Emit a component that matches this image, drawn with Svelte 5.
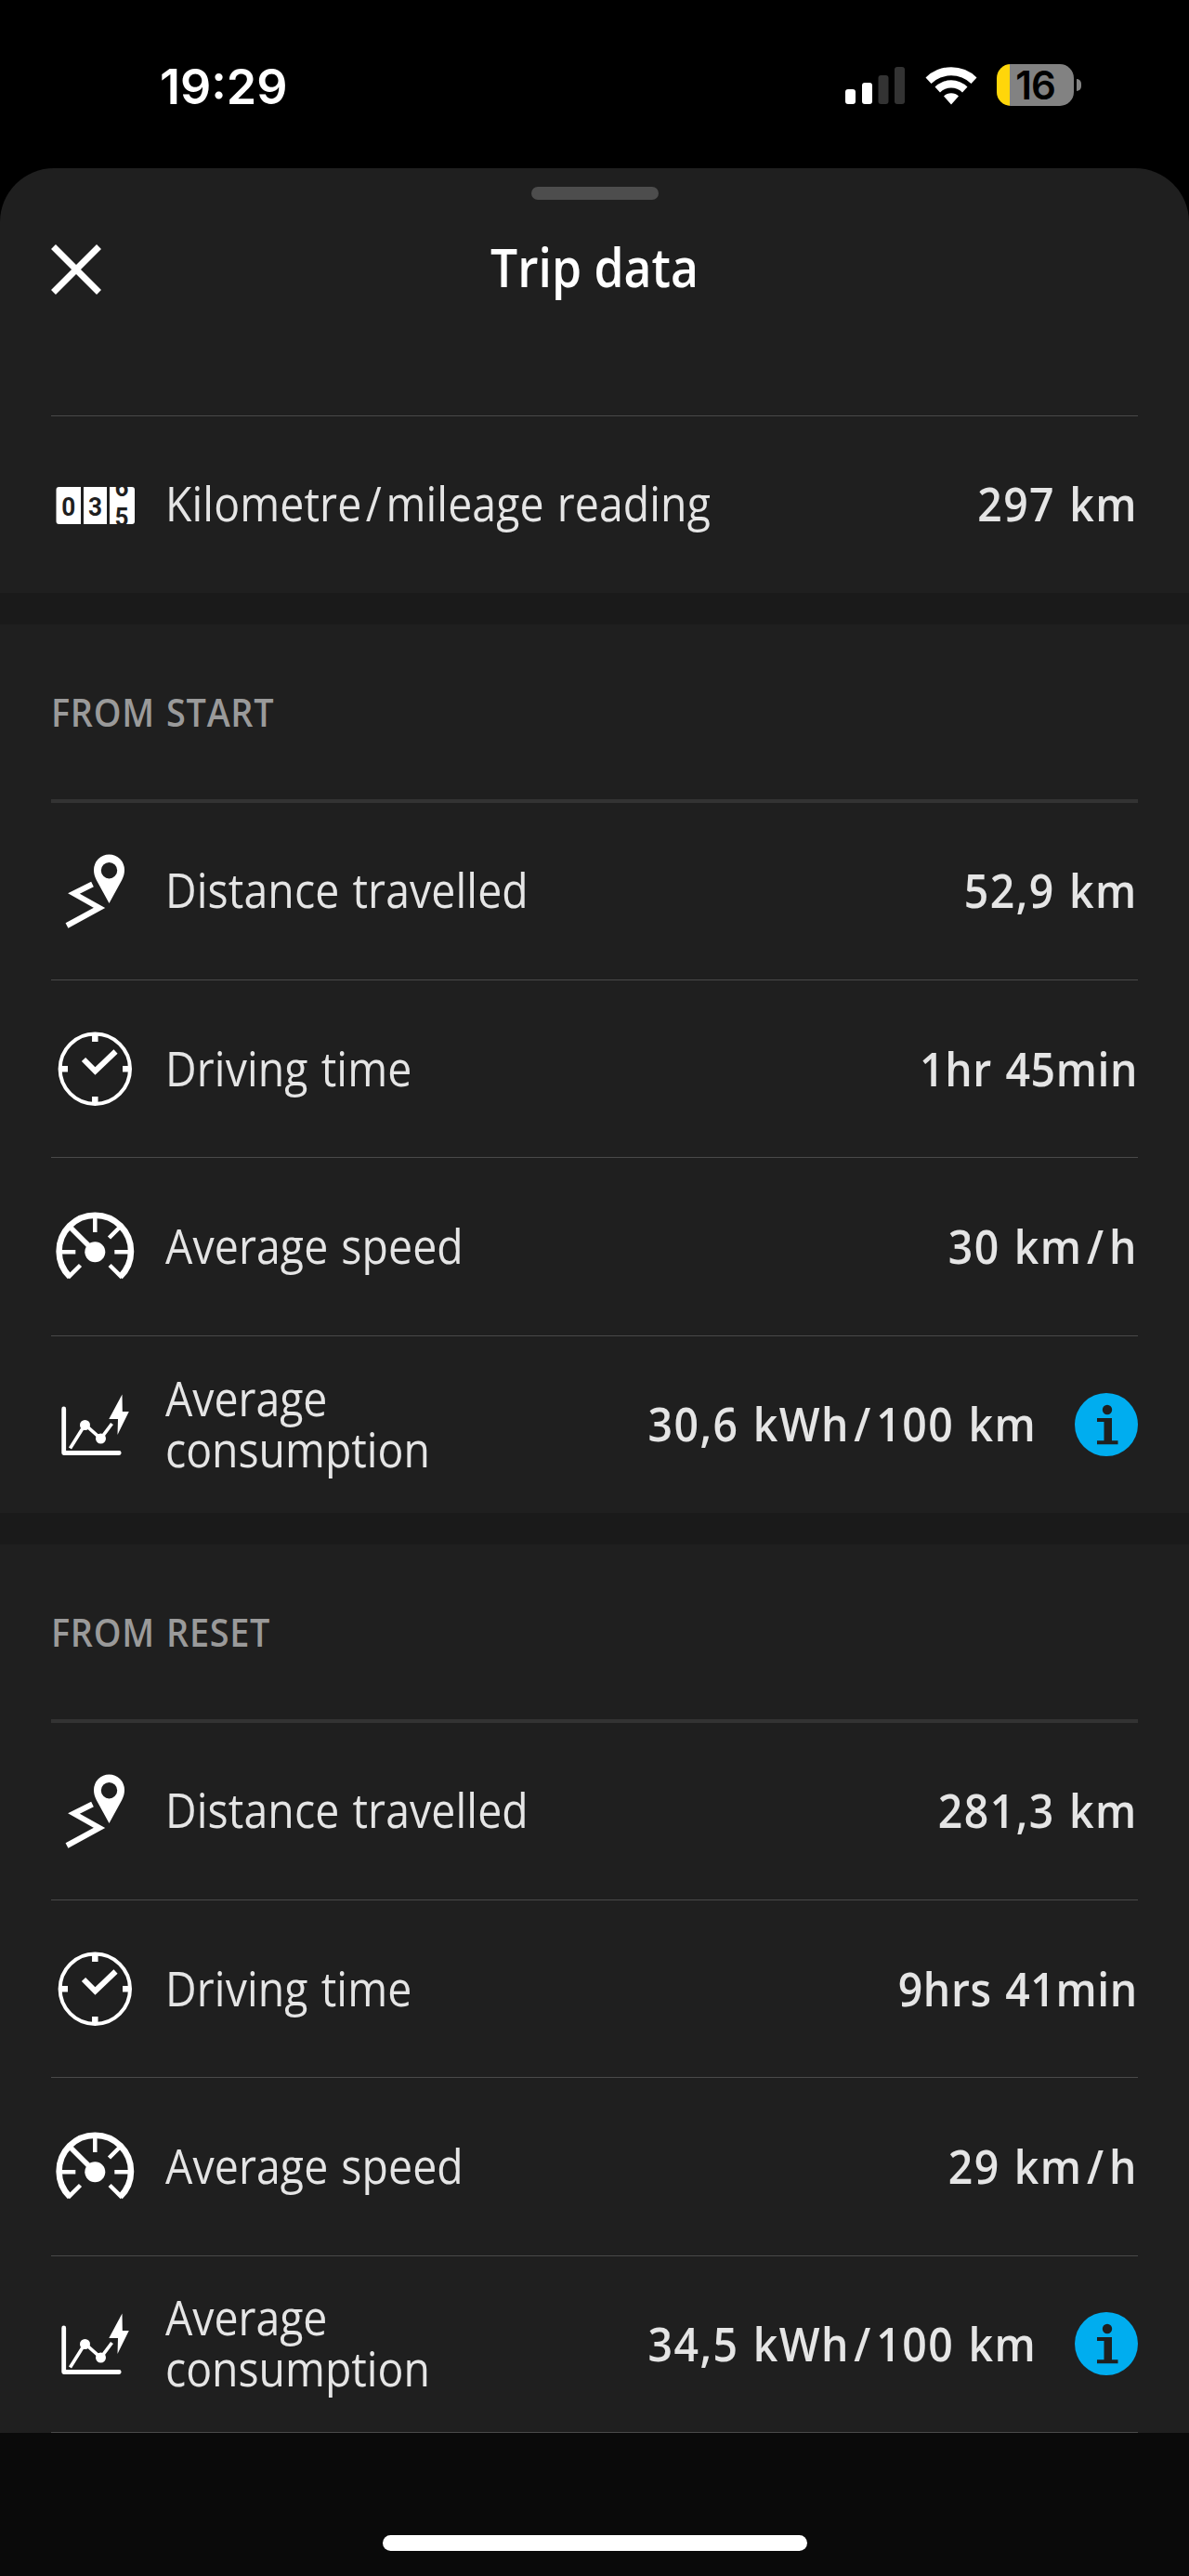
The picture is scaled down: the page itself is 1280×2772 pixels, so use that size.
<script>
  const sections = [
    {
      title: 'FROM START',
      rows: [
        { icon: 'route', label: 'Distance travelled', value: '52,9 km' },
        { icon: 'clock', label: 'Driving time', value: '1hr 45min', duration: true },
        { icon: 'gauge', label: 'Average speed', value: '30 km/h' },
        { icon: 'chart', label: 'Average consumption', value: '30,6 kWh/100 km', info: true }
      ]
    },
    {
      title: 'FROM RESET',
      rows: [
        { icon: 'route', label: 'Distance travelled', value: '281,3 km' },
        { icon: 'clock', label: 'Driving time', value: '9hrs 41min', duration: true },
        { icon: 'gauge', label: 'Average speed', value: '29 km/h' },
        { icon: 'chart', label: 'Average consumption', value: '34,5 kWh/100 km', info: true }
      ]
    }
  ];
</script>

{#snippet icon(name)}
  <svg class="icon" viewBox="0 0 88 88" width="88" height="88" aria-hidden="true">
    {#if name === 'odometer'}
      <path d="M3.500 25H27v40H3.500a3 3 0 0 1-3-3V28a3 3 0 0 1 3-3zM30 25h25v40H30zM58 25h24a3 3 0 0 1 3 3v34a3 3 0 0 1-3 3H58z" fill="#fff" />
      <g class="digits">
        <text x="13.700" y="55.500" textLength="15" lengthAdjust="spacingAndGlyphs">0</text>
        <text x="42.500" y="55.500" textLength="15" lengthAdjust="spacingAndGlyphs">3</text>
        <svg x="57" y="25" width="28" height="40" viewBox="57 25 28 40">
          <text x="71" y="34.500" textLength="15" lengthAdjust="spacingAndGlyphs">6</text>
          <text x="71" y="67" textLength="15" lengthAdjust="spacingAndGlyphs">5</text>
        </svg>
      </g>
    {:else if name === 'route'}
      <g transform="translate(0 1)">
        <path fill="#fff" fill-rule="evenodd" d="M57.500 3.500a16.500 16.500 0 0 1 16.500 16.500c0 4-1 7.500-2.800 11L57.500 56 43.800 31c-1.800-3.500-2.800-7-2.800-11A16.500 16.500 0 0 1 57.500 3.500zm0 8.500a8.700 8.700 0 1 0 0 17.400 8.700 8.700 0 0 0 0-17.400z" />
        <path d="M39.500 35.500 19.500 45.500 47 61 12 80" fill="none" stroke="#fff" stroke-width="6" />
      </g>
    {:else if name === 'clock'}
      <g fill="none" stroke="#fff">
        <circle cx="42.300" cy="44.300" r="37.700" stroke-width="4" />
        <path d="M42.300 6v9M42.300 74v9M4 44.300h9M72 44.300h9" stroke-width="6.500" />
        <path d="M30 34l12.500 12.500L64.500 25.500" stroke-width="6" />
      </g>
    {:else if name === 'gauge'}
      <g fill="none" stroke="#fff">
        <path d="M15.200 77A38.700 38.700 0 1 1 69.400 77" stroke-width="6.500" />
        <path d="M26.500 64.500 13.300 77.700M58.100 64.500l13.200 13.200M6 50.300h15.300M63.300 50.300h15.300M42.300 13v16M70 22.500 57.500 35" stroke-width="4.500" />
        <path d="M15.500 23.500 42.300 50.300" stroke-width="5.500" />
        <circle cx="42.300" cy="50.300" r="11" fill="#fff" stroke="none" />
      </g>
    {:else}
      <g fill="none" stroke="#fff">
        <path d="M8.700 27v47.500h59.500" stroke-width="4.800" stroke-linecap="round" stroke-linejoin="round" />
        <path d="M15.500 69.500 31.500 44l17 15L60.500 43" stroke-width="3.600" />
      </g>
      <circle cx="31.500" cy="44.500" r="5.500" fill="#fff" />
      <circle cx="48.500" cy="59" r="5.500" fill="#fff" />
      <path d="M71.500 11.500 57.300 38h9.700L66.500 55l12.300-25h-7z" fill="#fff" />
    {/if}
  </svg>
{/snippet}

{#snippet spaced(text)}
  {#each text.split('/') as part, i}{#if i}<span class="slash">/</span>{/if}{part}{/each}
{/snippet}

{#snippet row(item)}
  <div class="row">
    {@render icon(item.icon)}
    <span class="label" class:narrow={item.info}>{@render spaced(item.label)}</span>
    <span class="value" class:duration={item.duration}>{@render spaced(item.value)}</span>
    {#if item.info}
      <svg class="info" viewBox="0 0 68 68" width="68" height="68" aria-label="Information">
        <circle cx="34" cy="34" r="34" fill="#00adef" />
        <circle cx="35" cy="18" r="5.200" fill="#1f1f1f" />
        <path d="M24 27h16v24.200h6.500v4H24v-4h7.500V31H24z" fill="#1f1f1f" />
      </svg>
    {/if}
  </div>
{/snippet}

<div class="screen">
  <header class="status">
    <span class="time">19:29</span>
    <div class="indicators">
      <svg width="66" height="42" viewBox="0 0 66 42" aria-hidden="true">
        <rect x="1" y="25" width="11" height="16" rx="3" fill="#fff" />
        <rect x="19" y="18" width="11" height="23" rx="3" fill="#fff" />
        <rect x="36.500" y="10" width="11" height="31" rx="3" fill="#333" />
        <rect x="54" y="1" width="11" height="40" rx="3" fill="#333" />
      </svg>
      <svg width="58" height="42" viewBox="0 0 58 42" aria-hidden="true">
        <path d="M1.500 12.500a39 39 0 0 1 55 0l-6 6.500a31 31 0 0 0-43 0zM11.500 22.500a25 25 0 0 1 35 0L41 28.500a17 17 0 0 0-24 0zM21 32.500a11.500 11.500 0 0 1 16 0L29 41.500z" fill="#fff" />
      </svg>
      <div class="battery"><span>16</span></div>
    </div>
  </header>

  <main class="sheet">
    <div class="handle"></div>
    <div class="bar">
      <svg class="close" viewBox="0 0 54 54" width="54" height="54" aria-label="Close">
        <path d="M2.500 2.500 51.500 51.500M51.500 2.500 2.500 51.500" stroke="#fff" stroke-width="7" />
      </svg>
      <h1>Trip data</h1>
    </div>
    {@render row({ icon: 'odometer', label: 'Kilometre/mileage reading', value: '297 km' })}
    {#each sections as section}
      <section>
        <h2>{section.title}</h2>
        {#each section.rows as item}
          {@render row(item)}
        {/each}
      </section>
    {/each}
  </main>

  <footer><div class="home"></div></footer>
</div>

<style>
  :global(body) {
    margin: 0;
    background: #000;
  }
  .screen {
    width: 1280px;
    height: 2772px;
    display: flex;
    flex-direction: column;
    overflow: hidden;
    background: #000;
    color: #e5e5e5;
    font-family: 'Open Sans', 'Noto Sans', sans-serif;
  }
  .status {
    height: 181px;
    display: flex;
    justify-content: space-between;
    box-sizing: border-box;
    padding: 69px 116px 0 172px;
  }
  .time {
    padding-top: 1px;
    font: 600 52px/48px Inter, sans-serif;
    color: #fff;
  }
  .indicators {
    display: flex;
    align-items: flex-start;
    gap: 20px;
  }
  .indicators svg {
    margin-top: 2px;
  }
  .battery {
    position: relative;
    box-sizing: border-box;
    width: 83px;
    height: 45px;
    margin-right: 8px;
    border-radius: 15px;
    background: linear-gradient(90deg, #ffd60a 14px, #828282 14px);
    color: #000;
    text-align: center;
    letter-spacing: -1px;
    font: 600 42px/45px Inter, sans-serif;
  }
  .battery::after {
    content: '';
    position: absolute;
    left: 86px;
    top: 16px;
    width: 5px;
    height: 13px;
    border-radius: 0 6px 6px 0;
    background: #828282;
  }
  .sheet {
    background: #1f1f1f;
    border-radius: 58px 58px 0 0;
  }
  .handle {
    width: 137px;
    height: 14px;
    margin: 0 auto;
    border-radius: 7px;
    background: #4d4d4d;
    transform: translateY(20px);
  }
  .bar {
    height: 251.500px;
    display: grid;
    grid-template-columns: 54px 1fr 54px;
    align-items: start;
    box-sizing: border-box;
    padding: 68px 55px 0;
  }
  h1 {
    margin: -12px 0 0;
    font-size: 58px;
    line-height: 72px;
    font-weight: 600;
    text-align: center;
    color: #fff;
    transform: scaleX(0.89);
  }
  .row {
    height: 191.250px;
    margin: 0 55px;
    padding-left: 5px;
    box-sizing: border-box;
    display: flex;
    align-items: center;
    border-top: 1px solid #494949;
  }
  h2 + .row {
    border-top: 4px solid #333;
    margin-top: -3px;
    height: 194.250px;
  }
  section:last-child .row:last-child {
    border-bottom: 1px solid #494949;
  }
  .icon {
    flex: none;
  }
  .digits {
    font: 700 28.500px Roboto, sans-serif;
    text-anchor: middle;
    fill: #1f1f1f;
  }
  .label,
  .value {
    margin-top: -2px;
    font-size: 51.500px;
    line-height: 55px;
    white-space: nowrap;
    transform: scaleX(0.9);
  }
  .label {
    margin-left: 30px;
    letter-spacing: 0.150px;
    word-spacing: 2px;
    transform-origin: left;
  }
  .narrow {
    width: 320px;
    white-space: normal;
    letter-spacing: 0;
  }
  .value {
    margin-left: auto;
    font-weight: 600;
    letter-spacing: 1.600px;
    word-spacing: 2px;
    transform-origin: right;
  }
  .duration {
    letter-spacing: 0.700px;
    word-spacing: 2px;
  }
  .slash {
    padding: 0 5px;
  }
  .info {
    flex: none;
    margin-left: 41px;
  }
  section {
    border-top: 34px solid #1a1a1a;
  }
  h2 {
    height: 191px;
    margin: 0;
    padding-left: 55px;
    font-size: 42px;
    line-height: 188px;
    font-weight: 600;
    letter-spacing: 0.800px;
    word-spacing: 2px;
    color: #9a9a9a;
    transform: scaleX(0.9);
    transform-origin: 55px;
  }
  footer {
    flex: 1;
    display: flex;
    justify-content: center;
    align-items: flex-end;
    padding-bottom: 27px;
    background: #0a0a0a;
  }
  .home {
    width: 457px;
    height: 17px;
    border-radius: 9px;
    background: #fff;
  }
</style>
